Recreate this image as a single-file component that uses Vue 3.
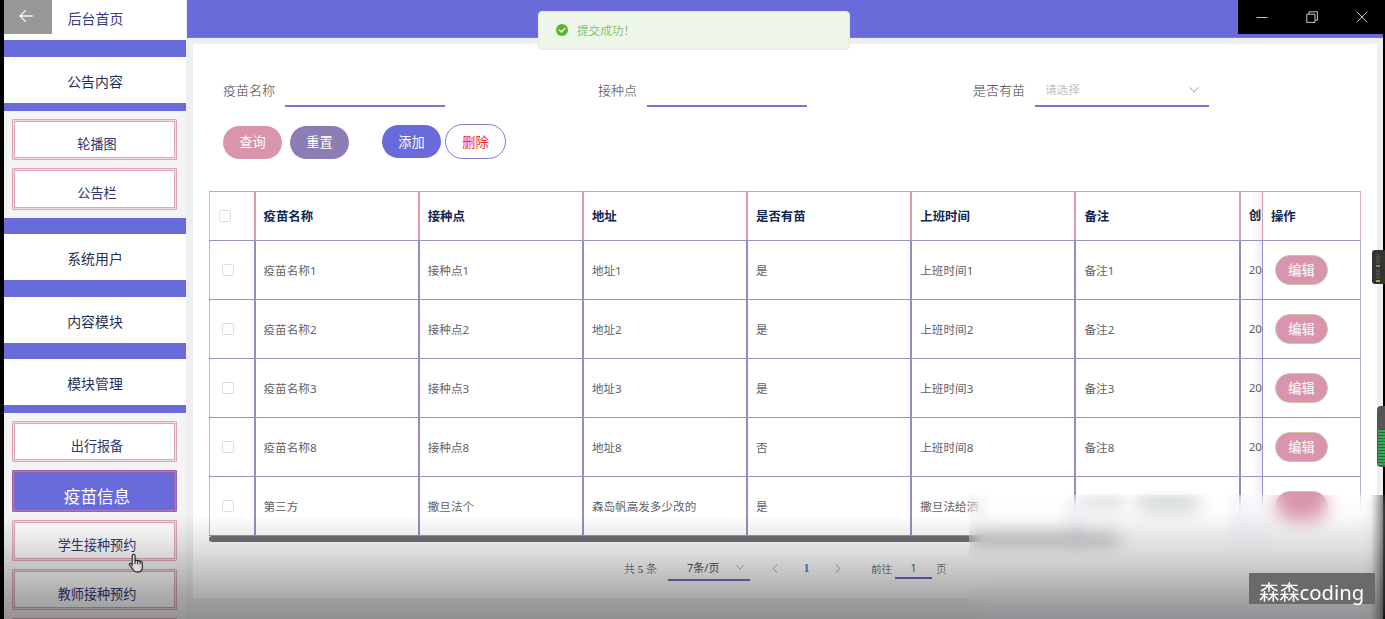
<script setup>
const columns = ['疫苗名称', '接种点', '地址', '是否有苗', '上班时间', '备注']
const rows = [
  ['疫苗名称1', '接种点1', '地址1', '是', '上班时间1', '备注1'],
  ['疫苗名称2', '接种点2', '地址2', '是', '上班时间2', '备注2'],
  ['疫苗名称3', '接种点3', '地址3', '是', '上班时间3', '备注3'],
  ['疫苗名称8', '接种点8', '地址8', '否', '上班时间8', '备注8'],
  ['第三方', '撒旦法个', '森岛帆高发多少改的', '是', '撒旦法给洒', ''],
]
const menuA = ['轮播图', '公告栏']
const menuB = ['出行报备', '疫苗信息', '学生接种预约', '教师接种预约', '']
</script>

<template>
  <div class="screen">
    <aside class="side">
      <div class="top home">后台首页</div>
      <div class="top">公告内容</div>
      <div class="sub first">
        <div v-for="m in menuA" :key="m" class="item">{{ m }}</div>
      </div>
      <div class="top">系统用户</div>
      <div class="top">内容模块</div>
      <div class="top">模块管理</div>
      <div class="sub second">
        <div v-for="m in menuB" :key="m" class="item" :class="{ active: m === '疫苗信息' }">{{ m }}</div>
      </div>
    </aside>

    <main class="main">
      <header class="bar"></header>
      <section class="card">
        <div class="form">
          <label class="f1"><span class="kai">疫苗名称</span><i class="line"></i></label>
          <label class="f2"><span class="kai">接种点</span><i class="line"></i></label>
          <label class="f3">
            <span class="kai">是否有苗</span>
            <i class="line select">
              <span>请选择</span>
              <svg width="10" height="6" viewBox="0 0 10 6"><path d="M0.8 0.6 5 5 9.2 0.6" /></svg>
            </i>
          </label>
        </div>
        <div class="buttons">
          <button class="btn query">查询</button>
          <button class="btn reset">重置</button>
          <button class="btn add">添加</button>
          <button class="btn del">删除</button>
        </div>

        <div class="table">
          <div class="tr head">
            <div class="td chk"><b class="box"></b></div>
            <div v-for="c in columns" :key="c" class="td">{{ c }}</div>
            <div class="td cut"><span>创</span></div>
            <div class="td op">操作</div>
          </div>
          <div v-for="(r, n) in rows" :key="r[0]" class="tr">
            <div class="td chk"><b class="box"></b></div>
            <div v-for="(c, i) in r" :key="i" class="td">
              <template v-if="c">{{ c }}</template>
              <template v-else><i class="smear short"></i><i class="smear"></i></template>
            </div>
            <div class="td cut"><span v-if="n < 4">20</span></div>
            <div class="td op"><button class="edit">{{ n < 4 ? '编辑' : '' }}</button></div>
          </div>
        </div>
        <div class="scroll"></div>

        <div class="pager">
          <span class="kai total">共 5 条</span>
          <span class="size">7条/页<svg width="8" height="5" viewBox="0 0 10 6"><path d="M0.8 0.6 5 5 9.2 0.6" /></svg></span>
          <svg class="prev" width="6" height="9" viewBox="0 0 6 9"><path d="M5 .6 1 4.5 5 8.4" /></svg>
          <span class="cur">1</span>
          <svg class="next" width="6" height="9" viewBox="0 0 6 9"><path d="M1 .6 5 4.5 1 8.4" /></svg>
          <span class="kai goto">前往</span>
          <span class="num">1</span>
          <span class="kai">页</span>
        </div>
      </section>
    </main>

    <div class="toast">
      <svg width="12" height="12" viewBox="0 0 12 12"><circle cx="6" cy="6" r="6" fill="#5cb531" /><path d="M3.3 6.1 5.3 8 8.8 4.5" fill="none" stroke="#eef6e9" stroke-width="1.4" /></svg>
      <span>提交成功！</span>
    </div>

    <div class="back">
      <svg width="14" height="12" viewBox="0 0 14 12"><path d="M13.3 6H1.2M6.2 .7 1 6l5.2 5.3" fill="none" stroke="#f4f4f4" stroke-width="1.3" /></svg>
    </div>
    <div class="win">
      <svg width="12" height="12" viewBox="0 0 12 12"><path d="M.5 6.5h11" /></svg>
      <svg width="12" height="12" viewBox="0 0 12 12"><path d="M.8 3.2h8.2v8.2H.8zM3 3V.8h8.4v8.4H9.2" /></svg>
      <svg width="12" height="12" viewBox="0 0 12 12"><path d="M.7.7l10.6 10.6M11.3.7.7 11.3" /></svg>
    </div>

    <div class="meter"><i></i><i class="o"></i><i></i><i class="g"></i></div>
    <div class="volume"><i></i></div>

    <div class="shade"></div>
    <div class="haze"></div>
    <div class="mark">森森coding</div>

    <svg class="cursor" width="16" height="20" viewBox="0 0 16 20">
      <path d="M5.6 1.2c.9 0 1.5.6 1.5 1.5v5c.3-.7 2.2-.7 2.5.3.5-.7 2.2-.5 2.5.5.6-.5 2.2-.2 2.2 1.2v4.2c0 3.2-1.500 5.200-4.700 5.200-2.800 0-4-1.200-5.200-3.500L1.400 11.800c-.6-1.200.7-2 1.600-1.200l1.200 1.500V2.700c0-.9.5-1.500 1.400-1.500z" fill="#dcdcdc" stroke="#222" stroke-width="1.1" />
      <path d="M7.100 7.500v3.200M9.600 8v2.900M12.100 8.600v2.500" stroke="#222" stroke-width="1" />
    </svg>
  </div>
</template>

<style>
html, body { margin: 0; background: #000; overflow: hidden; }
</style>

<style scoped>
* { box-sizing: border-box; }
.screen {
  position: relative;
  display: flex;
  width: 1385px;
  height: 619px;
  padding: 0 2px 0 4px;
  overflow: hidden;
  background: #000;
  font-family: "Noto Sans", "Noto Sans CJK SC", sans-serif;
  color: #606266;
}
i { font-style: normal; }
.side {
  width: 183px;
  height: 619px;
  overflow: hidden;
  background: #696bdb;
  border-right: 1px solid #eeeef3;
  flex: none;
}
.top {
  height: 46px;
  margin-bottom: 17px;
  background: #fff;
  color: #1d3158;
  font-size: 13.9px;
  line-height: 49px;
  text-align: center;
}
.top.home { height: 40px; line-height: 38px; color: #353c80; padding-left: 1px; }
.top:has(+ .sub) { margin-bottom: 8px; }
.sub { background: #f4f4f4; padding: 8px 9px 0 8px; }
.sub.first { height: 107px; margin-bottom: 16px; }
.sub.first + .top + .top { margin-bottom: 16px; }
.sub.second { height: 230px; }
.item {
  height: 41.3px;
  margin-bottom: 8px;
  border: 3px double #dba6b8;
  border-radius: 1px;
  background: linear-gradient(#fff, #fff) padding-box, #f3dbe3;
  color: #303672;
  font-size: 13.1px;
  line-height: 45px;
  text-align: center;
  text-indent: 5px;
}
.item.active {
  background: linear-gradient(#696bdb, #696bdb) padding-box, #a878c4;
  border-color: #9462b4;
  color: #fff;
  font-size: 16.6px;
  line-height: 47px;
}
.main { flex: 1; height: 619px; background: #eeeef3; }
.bar { height: 38px; background: #696bdb; border-bottom: 1px solid #7577dd; }
.card {
  width: 1184px;
  height: 554px;
  margin: 6px 0 0 6px;
  padding: 28px 16px 0;
  background: #fff;
}
.kai { font-family: KaiTi, "Liberation Serif", "Noto Sans CJK SC", serif; font-weight: 300; color: #3c3f45; }
.form {
  display: grid;
  grid-template-columns: 375px 375px 1fr;
  height: 35px;
  padding-left: 14px;
}
.form label { display: flex; gap: 10px; font-size: 13px; line-height: 37px; }
.line { width: 160px; height: 35px; border-bottom: 2px solid #7876d2; }
.select {
  display: flex;
  width: 174px;
  padding: 2px 10px 0 10px;
  justify-content: space-between;
  align-items: center;
  color: #bfc3cc;
  font-size: 11.6px;
}
svg path { stroke-linecap: round; }
.select svg path, .size svg path { fill: none; stroke: #b9bdc6; stroke-width: 1.1; }
.buttons { display: flex; align-items: center; height: 35px; margin: 17px 0 32px 14px; }
button { font-family: inherit; padding: 0; border: 0; }
.btn { width: 59px; height: 33px; border-radius: 17px; color: #fff; font-size: 13.2px; line-height: 32px; }
.query, .reset { margin-top: 2px; padding-bottom: 2px; }
.query { background: #d995ab; margin-right: 8px; }
.reset { background: #8c7db2; margin-right: 33px; }
.add { background: #696bdb; margin-right: 4px; }
.del { width: 61px; height: 35px; background: #fdfdff; border: 1px solid #7f7dd0; border-radius: 18px; color: #e8312b; }
.table { width: 1152px; height: 344.500px; border-top: 1px solid #d9a0b2; overflow: hidden; }
.tr {
  display: grid;
  grid-template-columns: 46.500px repeat(6, 164.200px) 22.300px 98px;
  height: 59.100px;
  border-bottom: 1px solid #9893c2;
  font-size: 11.600px;
}
.tr.head { height: 49px; font-size: 12.400px; font-weight: 700; color: #10264f; }
.td {
  display: flex;
  align-items: center;
  padding: 0 0 1px 8px;
  border-right: 2px solid #988cbe;
  overflow: hidden;
  white-space: nowrap;
}
.head .td { border-right-color: #dc9dae; padding-top: 0; padding-bottom: 0; }
.chk { border-left: 1px solid #bfb7d8; padding-left: 12px; padding-bottom: 0; }
.head .chk { border-left-color: #e3b5c3; padding-left: 9px; }
.box { width: 12px; height: 12px; border: 1px solid #dcdfe6; border-radius: 2px; background: #fff; }
.smear { width: 62px; height: 13px; background: #c9cdcd; filter: blur(5px); }
.smear.short { width: 40px; margin-right: 13px; background: #d9dcdc; }
.cut { border-right-width: 1px; border-right-color: #9490ca; background: linear-gradient(90deg, #fff 50%, #efeff3); }
.head .cut { padding-bottom: 3px; }
.op { border-right: 1px solid #b7b1d0; }
.head .op { border-right-color: #e0b0be; padding-left: 8px; }
.tr:not(.head) .op { padding: 0 0 0 12px; }
.edit {
  width: 53px;
  height: 30px;
  border: 1px solid #cfc3a4;
  border-radius: 15px;
  background: #d995ae;
  color: #fff;
  font-size: 13.200px;
  line-height: 26px;
}
.scroll { width: 910px; height: 6px; border-radius: 3px; background: #737373; }
.pager { display: flex; align-items: center; height: 26px; margin: 13.500px 0 0 415px; font-size: 10.600px; }
.total { font-size: 11px; width: 44px; white-space: nowrap; }
.pager svg path { fill: none; stroke: #a5a7ab; }
.size {
  display: flex;
  align-items: center;
  justify-content: space-between;
  width: 82px;
  height: 26px;
  padding: 0 6px 0 19px;
  border-bottom: 2px solid #7370c6;
  font-size: 11px;
  color: #505256;
}
.prev { margin-left: 22px; }
.cur { width: 57px; text-align: center; color: #3b8ae6; font: 700 12px "Liberation Serif", serif; }
.goto { margin-left: 30px; width: 24px; }
.num { width: 37px; height: 22px; line-height: 23px; border-bottom: 2px solid #6b69c2; text-align: center; margin-right: 4px; }
.toast {
  position: absolute;
  left: 538px;
  top: 11px;
  display: flex;
  align-items: center;
  gap: 9px;
  width: 312px;
  height: 39px;
  padding: 0 0 1px 17px;
  border: 1px solid #e1efd9;
  border-radius: 4px;
  background: #eef6e9;
  color: #57a938;
  font: 300 11.600px KaiTi, "Noto Sans CJK SC", sans-serif;
}
.back { position: absolute; left: 4px; top: 0; width: 48px; height: 34px; background: #989898; display: flex; align-items: center; justify-content: center; padding: 0 4px 2px 0; }
.win {
  position: absolute;
  left: 1238px;
  top: 0;
  display: flex;
  align-items: center;
  gap: 38px;
  width: 147px;
  height: 34px;
  padding-left: 18px;
  background: #000;
}
.win svg { flex: none; }
.win path { fill: none; stroke: #c9c9c9; stroke-width: 1; stroke-linecap: butt; }
.meter { position: absolute; left: 1372px; top: 250px; width: 13px; height: 34px; padding: 4px 5px 0 4px; border-radius: 3px 0 0 3px; background: #333; }
.meter i { display: block; height: 10px; background: repeating-linear-gradient(#505050 0 1px, #3c3c3c 1px 2px); }
.meter .o, .meter .g { height: 2px; margin: 1px 0 2px; background: #a87a30; }
.meter .g { background: #86b83a; margin-bottom: 0; }
.volume { position: absolute; left: 1377px; top: 406px; width: 8px; height: 61px; padding: 23px 0 2px 1px; border-radius: 4px 0 0 4px; background: #555; }
.volume i { display: block; height: 36px; background: repeating-linear-gradient(#3f5a47 0 1px, #2fae54 1px 3px); }
.shade {
  position: absolute;
  left: 4px;
  right: 0;
  top: 515px;
  bottom: 0;
  background: linear-gradient(rgba(0, 0, 0, 0), rgba(0, 0, 0, .1) 27%, rgba(0, 0, 0, .32) 76%, rgba(0, 0, 0, .4));
}
.haze {
  position: absolute;
  left: 969px;
  top: 495px;
  width: 416px;
  height: 124px;
  backdrop-filter: blur(9px);
  background: linear-gradient(270deg, rgba(0, 0, 0, .5), rgba(0, 0, 0, .22) 6px, rgba(0, 0, 0, 0) 14px);
}
.mark {
  position: absolute;
  left: 1249px;
  top: 573px;
  width: 126px;
  height: 31px;
  padding-left: 10px;
  background: #6a6a6a;
  color: #fff;
  font-size: 20.300px;
  line-height: 39px;
  white-space: nowrap;
}
.cursor { position: absolute; left: 128px; top: 553px; }
</style>
